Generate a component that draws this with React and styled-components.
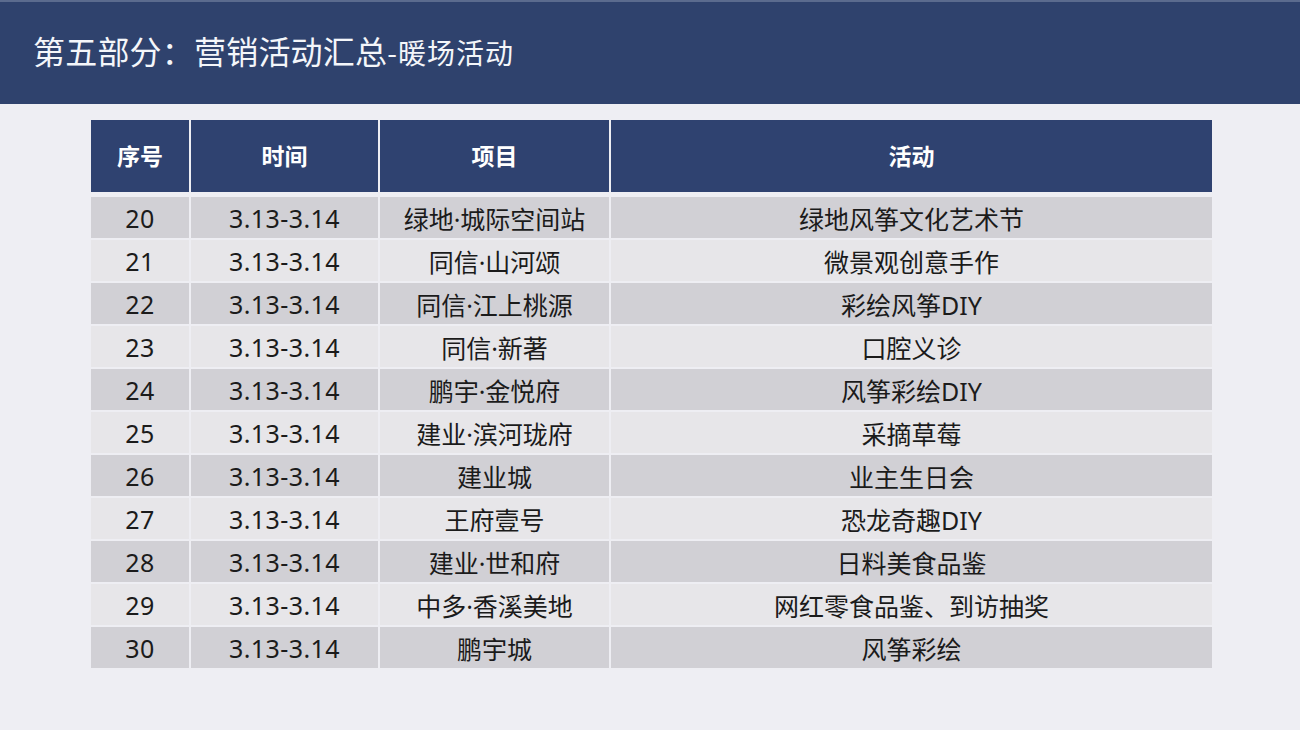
import React from 'react';
import styled, { createGlobalStyle } from 'styled-components';

const GlobalStyle = createGlobalStyle`
  html, body {
    margin: 0;
    padding: 0;
    background: #eeeef3;
  }
  body {
    font-family: "Noto Sans", "Noto Sans CJK SC", sans-serif;
  }
`;

const Page = styled.div`
  width: 1300px;
  height: 730px;
  background: #eeeef3;
  overflow: hidden;
`;

const TitleBar = styled.header`
  height: 104px;
  box-sizing: border-box;
  background: #2f426d;
  border-top: 2px solid #5b6b8e;
  display: flex;
  align-items: center;
  padding: 0 0 6px 33px;
`;

const Title = styled.h1`
  margin: 0;
  color: #f4f6fa;
  font-family: "Noto Sans CJK SC", sans-serif;
  font-weight: 400;
  font-size: 32px;
  letter-spacing: 0.2px;
  white-space: nowrap;
`;

const SubTitle = styled.span`
  font-size: 28px;
  letter-spacing: 1px;
`;

const TableWrap = styled.div`
  margin: 16px 0 0 91px;
  width: 1121px;
  display: flex;
  flex-direction: column;
  gap: 2px;
`;

const Row = styled.div`
  display: grid;
  grid-template-columns: 98px 187px 229px 1fr;
  column-gap: 2px;
  height: ${p => (p.$head ? '72px' : '41px')};
  margin-bottom: ${p => (p.$head ? '3px' : '0')};
`;

const Cell = styled.div`
  display: flex;
  align-items: center;
  justify-content: center;
  background: ${p => (p.$head ? '#2f4270' : p.$shade ? '#d1d0d5' : '#e7e6e9')};
  color: ${p => (p.$head ? '#ffffff' : '#1b1b1b')};
  font-family: "Noto Sans", "Noto Sans CJK SC", sans-serif;
  font-size: ${p => (p.$head ? '23px' : '25px')};
  font-weight: ${p => (p.$head ? 700 : 400)};
  padding-bottom: ${p => (p.$head ? '2px' : '0')};
  white-space: nowrap;
`;

const Num = styled.span`
  font-family: "Noto Sans", sans-serif;
  font-size: 25px;
  letter-spacing: 0.4px;
`;

const rows = [
  ['20', '绿地·城际空间站', '绿地风筝文化艺术节'],
  ['21', '同信·山河颂', '微景观创意手作'],
  ['22', '同信·江上桃源', '彩绘风筝DIY'],
  ['23', '同信·新著', '口腔义诊'],
  ['24', '鹏宇·金悦府', '风筝彩绘DIY'],
  ['25', '建业·滨河珑府', '采摘草莓'],
  ['26', '建业城', '业主生日会'],
  ['27', '王府壹号', '恐龙奇趣DIY'],
  ['28', '建业·世和府', '日料美食品鉴'],
  ['29', '中多·香溪美地', '网红零食品鉴、到访抽奖'],
  ['30', '鹏宇城', '风筝彩绘'],
];

export default function App() {
  return (
    <Page>
      <GlobalStyle />
      <TitleBar>
        <Title>
          第五部分：营销活动汇总<SubTitle>-暖场活动</SubTitle>
        </Title>
      </TitleBar>
      <TableWrap>
        <Row $head>
          <Cell $head>序号</Cell>
          <Cell $head>时间</Cell>
          <Cell $head>项目</Cell>
          <Cell $head>活动</Cell>
        </Row>
        {rows.map(([no, project, activity], i) => (
          <Row key={no}>
            <Cell $shade={i % 2 === 0}><Num>{no}</Num></Cell>
            <Cell $shade={i % 2 === 0}><Num>3.13-3.14</Num></Cell>
            <Cell $shade={i % 2 === 0}>{project}</Cell>
            <Cell $shade={i % 2 === 0}>{activity}</Cell>
          </Row>
        ))}
      </TableWrap>
    </Page>
  );
}
